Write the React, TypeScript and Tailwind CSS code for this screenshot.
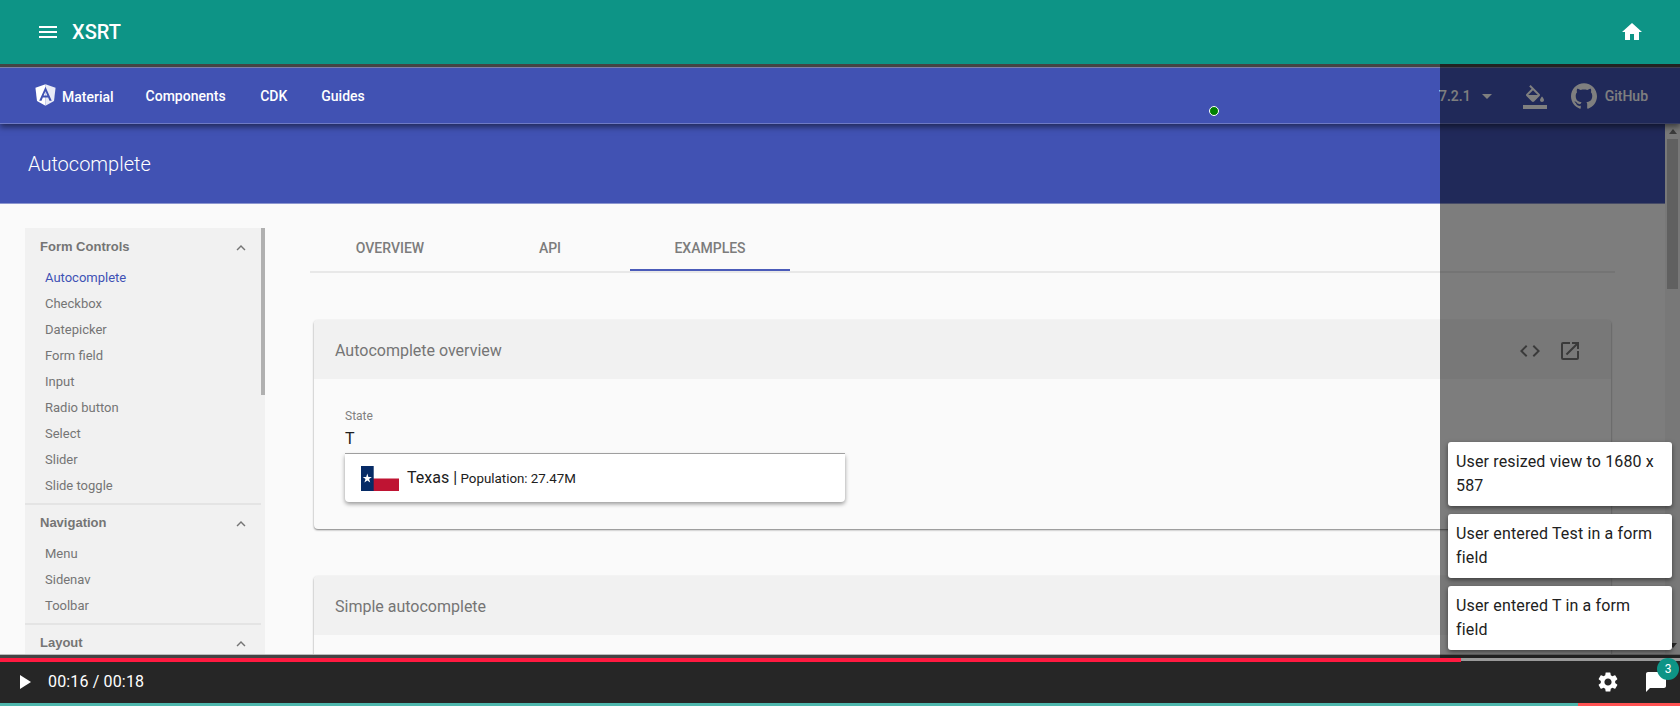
import type { ReactNode } from 'react';
import {
  MdArrowDropDown,
  MdChatBubble,
  MdCode,
  MdExpandLess,
  MdHome,
  MdMenu,
  MdOpenInNew,
  MdPlayArrow,
  MdSettings,
} from 'react-icons/md';
import { SiGithub } from 'react-icons/si';

const sections = [
  {
    title: 'Form Controls',
    items: [
      'Autocomplete',
      'Checkbox',
      'Datepicker',
      'Form field',
      'Input',
      'Radio button',
      'Select',
      'Slider',
      'Slide toggle',
    ],
  },
  { title: 'Navigation', items: ['Menu', 'Sidenav', 'Toolbar'] },
  { title: 'Layout', items: [] },
];

const events = [
  'User resized view to 1680 x 587',
  'User entered Test in a form field',
  'User entered T in a form field',
];

function AngularLogo() {
  return (
    <svg viewBox="0 0 250 250" className="h-[27px] w-[27px]">
      <path fill="#fff" d="M125 30 31.900 63.200 46.100 186.300 125 230z" />
      <path fill="#fff" fillOpacity="0.88" d="M125 30 218.100 63.200 203.900 186.300 125 230z" />
      <path
        fill="#4152b3"
        d="M125 52.100 66.800 182.600h21.700l11.700-29.200h49.400l11.700 29.200H183zm17 83.300h-34l17-40.900z"
      />
    </svg>
  );
}

function ColorFillIcon() {
  return (
    <svg viewBox="0 0 24 24" fill="currentColor" className="mt-[3px] ml-6 size-6">
      <path d="M16.560 8.940 7.620 0 6.210 1.410l2.380 2.380-5.150 5.150c-.59.59-.59 1.540 0 2.120l5.500 5.500c.29.29.68.44 1.060.44s.77-.15 1.060-.44l5.500-5.500c.59-.58.59-1.530 0-2.120zM5.210 10 10 5.210 14.790 10zM19 11.500s-2 2.170-2 3.500c0 1.100.9 2 2 2s2-.9 2-2c0-1.330-2-3.500-2-3.500zM0 20h24v4H0z" />
    </svg>
  );
}

function TexasFlag() {
  return (
    <svg viewBox="0 0 38 25" className="h-[25px] w-[38px]">
      <rect width="38" height="25" fill="#fff" />
      <rect x="12" y="12.500" width="26" height="12.500" fill="#bf1433" />
      <rect width="12.700" height="25" fill="#062b66" />
      <path
        fill="#fff"
        d="M6.300 7.600 7.400 11h3.500L8.100 13.100l1.100 3.400-2.900-2.100-2.900 2.100 1.100-3.400L1.700 11h3.500z"
      />
    </svg>
  );
}

function AppBar() {
  return (
    <header className="flex h-16 shrink-0 items-center bg-[#0d9486] pr-9 pl-9 text-white">
      <MdMenu className="size-6" />
      <h1 className="ml-3 text-xl font-medium">XSRT</h1>
      <MdHome className="ml-auto size-6" />
    </header>
  );
}

function SiteNav() {
  return (
    <nav className="relative z-10 flex h-[57px] shrink-0 items-center border-t border-b border-t-[#7c80a5] border-b-[#6f7bc5] bg-[#4152b3] text-sm font-medium text-white shadow-[0_3px_6px_rgba(0,0,0,0.5)]">
      <div className="ml-8 flex items-center">
        <span className="-mt-0.5">
          <AngularLogo />
        </span>
        <span className="ml-[3px] pt-[3px]">Material</span>
      </div>
      <span className="ml-8 pt-px">Components</span>
      <span className="ml-[34.5px] pt-px">CDK</span>
      <span className="ml-[34px] pt-px">Guides</span>
      <span className="ml-auto pt-px">7.2.1</span>
      <MdArrowDropDown className="mt-px ml-1 size-6" />
      <ColorFillIcon />
      <SiGithub className="ml-6 size-[26px]" />
      <span className="mr-8 ml-2 pt-px">GitHub</span>
    </nav>
  );
}

function Sidebar() {
  return (
    <aside className="mt-6 ml-[25px] flex w-[240px] shrink-0 bg-[#f1f1f1] text-[#757575]">
      <div className="w-[236px] pt-px">
        {sections.map((section) => (
          <section key={section.title} className="border-b-2 border-[#e4e4e4] pb-1 last:border-0">
            <h3 className="flex h-9 items-center justify-between pr-[11px] pl-[15px] font-['Liberation_Sans',Arial,sans-serif] text-[13px] font-bold">
              {section.title}
              <MdExpandLess className="mt-0.5 size-[18px]" />
            </h3>
            <ul className="text-[13px]">
              {section.items.map((item) => (
                <li
                  key={item}
                  className={
                    item === 'Autocomplete'
                      ? 'flex h-[26px] items-center pl-5 text-[#3f51b5]'
                      : 'flex h-[26px] items-center pl-5'
                  }
                >
                  {item}
                </li>
              ))}
            </ul>
          </section>
        ))}
      </div>
      <div className="h-[167px] w-1 bg-[#b0b0b0]" />
    </aside>
  );
}

function Card({ title, children }: { title: string; children?: ReactNode }) {
  return (
    <section className="ml-1 h-[209px] w-[1297px] shrink-0 rounded-sm bg-[#fafafa] shadow-[0_1px_2px_rgba(0,0,0,0.5)]">
      <div className="flex h-[59px] items-center rounded-t-sm bg-[#f1f1f1] pt-[3px] pr-[29px] pl-[21px] text-[#757575]">
        <h2 className="text-base">{title}</h2>
        <MdCode className="ml-auto size-6" />
        <MdOpenInNew className="ml-4 size-6" />
      </div>
      {children}
    </section>
  );
}

function StateField() {
  return (
    <div className="ml-[31px] w-[500px] pt-[30px]">
      <div className="text-xs leading-[14px] text-[#808080]">State</div>
      <div className="mt-[5px] h-[26px] border-b border-[#a8a8a8] text-base leading-[22px] text-[#202020]">T</div>
      <div className="flex h-[48px] items-center rounded-b bg-white pl-4 text-[#202020] shadow-[0_2px_4px_rgba(0,0,0,0.4)]">
        <TexasFlag />
        <span className="ml-2 text-base">Texas |</span>
        <span className="ml-[3.5px] pt-px text-[13.33px]">Population: 27.47M</span>
      </div>
    </div>
  );
}

function MainPanel() {
  return (
    <main className="ml-[45px] flex w-[1305px] shrink-0 flex-col pt-6">
      <div className="mb-[47px] flex h-[45px] shrink-0 border-b-2 border-[#e8e8e8] text-sm font-medium text-[#7c7c7c]">
        <div className="flex w-40 items-center justify-center pb-1">OVERVIEW</div>
        <div className="flex w-40 items-center justify-center pb-1">API</div>
        <div className="flex w-40 items-center justify-center border-b-2 border-[#4a5bb9] pb-0.5">EXAMPLES</div>
      </div>
      <div className="flex flex-col gap-[47px]">
        <Card title="Autocomplete overview">
          <StateField />
        </Card>
        <Card title="Simple autocomplete" />
      </div>
    </main>
  );
}

function PageScrollbar() {
  return (
    <div className="flex w-[15px] shrink-0 flex-col items-center bg-[#f1f1f1] pt-[5px]">
      <svg viewBox="0 0 8 5" className="h-[5px] w-2">
        <path d="M0 5 4 0l4 5z" fill="#777" />
      </svg>
      <div className="mt-[5px] h-[150px] w-[11px] bg-[#c1c1c1]" />
      <svg viewBox="0 0 8 5" className="mt-auto mb-1.5 h-[5px] w-2">
        <path d="M0 0h8L4 5z" fill="#505050" />
      </svg>
    </div>
  );
}

function ReplayView() {
  return (
    <div className="relative flex h-[594px] shrink-0 flex-col overflow-hidden border-t-[3px] border-b-[3px] border-[#444]">
      <SiteNav />
      <div className="flex min-h-0 flex-1 border-b border-[#bcbcbc]">
        <div className="flex min-w-0 flex-1 flex-col overflow-hidden bg-[#fafafa]">
          <div className="flex h-20 shrink-0 items-center border-b border-[#8c96cf] bg-[#4152b3] pl-7 text-xl font-light text-white">
            Autocomplete
          </div>
          <div className="flex min-h-0 flex-1 overflow-hidden">
            <Sidebar />
            <MainPanel />
          </div>
        </div>
        <PageScrollbar />
      </div>
      <div className="absolute top-[39px] left-[1209px] z-20 size-[10px] rounded-full border border-white bg-[#008000]" />
    </div>
  );
}

function EventList() {
  return (
    <div className="absolute top-16 right-0 z-30 flex h-[594px] w-60 flex-col justify-end gap-2 bg-black/50 p-2">
      {events.map((event) => (
        <div
          key={event}
          className="rounded-[3px] bg-white p-2 text-base leading-6 tracking-[0.15px] text-[#212121] shadow-[0_2px_5px_rgba(0,0,0,0.5)]"
        >
          {event}
        </div>
      ))}
    </div>
  );
}

function Controls() {
  return (
    <footer className="flex h-12 shrink-0 flex-col bg-[#262626] text-white">
      <div className="flex h-1 shrink-0 items-start">
        <div className="h-1 w-[1461px] bg-[#ff1a40]" />
        <div className="h-[3px] flex-1 bg-[#999]" />
      </div>
      <div className="flex flex-1 items-center px-3 pb-0.5">
        <MdPlayArrow className="size-6" />
        <span className="ml-3 text-base tracking-[0.15px]">00:16 / 00:18</span>
        <MdSettings className="ml-auto size-6" />
        <div className="relative ml-6">
          <MdChatBubble className="size-6" />
          <span className="absolute -top-3 -right-[11px] z-40 flex size-[22px] items-center justify-center rounded-full bg-[#0d9486] text-xs">
            3
          </span>
        </div>
      </div>
      <div className="flex h-[3px] shrink-0">
        <div className="w-[1578px] bg-[#4db6ac]" />
        <div className="flex-1 bg-[#ff5252]" />
      </div>
    </footer>
  );
}

export default function App() {
  return (
    <div className="relative flex h-[706px] w-[1680px] flex-col overflow-hidden bg-[#262626] font-['Roboto',sans-serif]">
      <AppBar />
      <ReplayView />
      <EventList />
      <Controls />
    </div>
  );
}
